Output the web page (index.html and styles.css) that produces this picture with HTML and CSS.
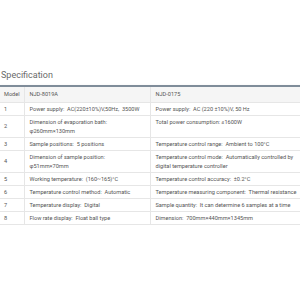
FILE: index.html
```html
<!DOCTYPE html>
<html lang="en">
<head>
    <meta charset="UTF-8">
    <title>Specification</title>
    <link rel="stylesheet" href="styles.css">
</head>
<body>
    <h2 class="spec-title">Specification</h2>
    <table class="spec-table">
        <colgroup>
            <col class="col-no">
            <col class="col-a">
            <col class="col-b">
        </colgroup>
        <tr class="head">
            <td>Model</td>
            <td>NJD-8019A</td>
            <td>NJD-0175</td>
        </tr>
        <tr>
            <td>1</td>
            <td>Power supply:&nbsp; AC(220±10%)V,50Hz,&nbsp; 3500W</td>
            <td>Power supply:&nbsp; AC (220 ±10%)V, 50 Hz</td>
        </tr>
        <tr>
            <td>2</td>
            <td>Dimension of evaporation bath:<br>φ260mm×130mm</td>
            <td class="top">Total power consumption: ≤1600W</td>
        </tr>
        <tr>
            <td>3</td>
            <td>Sample positions:&nbsp; 5 positions</td>
            <td>Temperature control range:&nbsp; Ambient to 100°C</td>
        </tr>
        <tr>
            <td>4</td>
            <td>Dimension of sample position:<br>φ51mm×70mm</td>
            <td>Temperature control mode:&nbsp; Automatically controlled by digital temperature controller</td>
        </tr>
        <tr>
            <td>5</td>
            <td>Working temperature:&nbsp; (160~165)°C</td>
            <td>Temperature control accuracy:&nbsp; ±0.2°C</td>
        </tr>
        <tr>
            <td>6</td>
            <td>Temperature control method:&nbsp; Automatic</td>
            <td>Temperature measuring component:&nbsp; Thermal resistance</td>
        </tr>
        <tr>
            <td>7</td>
            <td>Temperature display:&nbsp; Digital</td>
            <td>Sample quantity:&nbsp; It can determine 6 samples at a time</td>
        </tr>
        <tr>
            <td>8</td>
            <td>Flow rate display:&nbsp; Float ball type</td>
            <td>Dimension:&nbsp; 700mm×440mm×1345mm</td>
        </tr>
    </table>
</body>
</html>
```

FILE: styles.css
```css
body {
    margin: 0;
    padding-top: 69px;
    background: #fff;
    font-family: Roboto, "Liberation Sans", sans-serif;
    color: #555;
}
.spec-title {
    margin: 0 0 3px 1px;
    font-size: 9px;
    font-weight: 400;
    color: #6a6a6a;
    line-height: 13px;
}
.spec-table {
    width: 302px;
    border-collapse: collapse;
    border-top: 2px solid #7f8c99;
    box-shadow: 0 2px 4px rgba(0, 0, 0, 0.12);
    font-size: 5.6px;
    line-height: 9px;
    table-layout: fixed;
}
.col-no {
    width: 24px;
}
.col-a {
    width: 126px;
}
.col-b {
    width: 152px;
}
.spec-table td {
    padding: 1.5px 3px 1.5px 5px;
    border-bottom: 1px solid #e6e6e6;
    border-left: 1px solid #e6e6e6;
    vertical-align: middle;
}
.spec-table td:first-child {
    border-left: none;
    padding-left: 4px;
}
.spec-table td.top {
    vertical-align: top;
}
.head td {
    background: #f5f5f5;
    padding-top: 3px;
    padding-bottom: 3px;
}
```
